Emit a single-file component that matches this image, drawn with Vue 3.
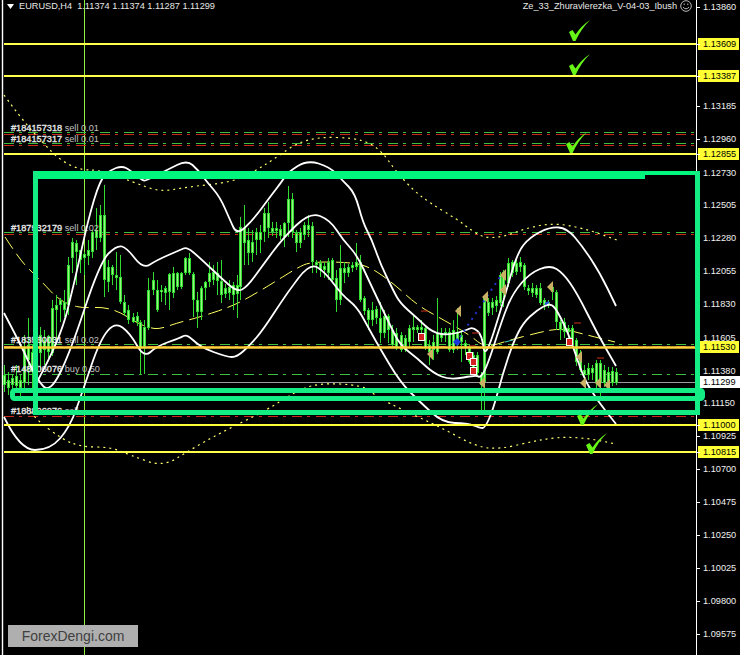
<template>
  <div class="terminal">
    <div class="chart">
      <svg class="plot" width="696" height="655" viewBox="0 0 696 655">
        <line x1="2.5" y1="0" x2="2.5" y2="655" stroke="#fff" stroke-width="1.4" />
        <line x1="84.5" y1="0" x2="84.5" y2="655" stroke="#8ff23c" />

        <g v-for="o in orderLines" :key="o.y">
          <line v-if="o.green" class="order" x1="4" x2="694" :y1="o.y" :y2="o.y" stroke="#3fbf3f" />
          <line v-if="o.red" class="order" x1="4" x2="694" :y1="o.y + 2" :y2="o.y + 2" stroke="#c92a1c" />
        </g>
        <line x1="4" y1="382.5" x2="696" y2="382.5" stroke="#9a9aa0" />

        <path class="ma dots" :d="smooth(maUpper)" />
        <path class="ma dots" :d="smooth(maLower)" />
        <path class="ma dashes" :d="smooth(maMiddle)" />

        <g v-for="c in candles" :key="c[0]">
          <line :x1="c[0] + 0.5" :x2="c[0] + 0.5" :y1="c[1]" :y2="c[4]" stroke="#2fdc2f" />
          <rect :x="c[0] - 1" :y="c[2]" width="3" :height="c[3] - c[2]" fill="#2fdc2f" />
          <rect :x="c[0]" :y="c[2] + 1" width="1" :height="Math.max(c[3] - c[2] - 2, 1)" fill="#9cf482" />
        </g>

        <text v-for="t in orderText" :key="t.y" class="order-text" x="11" :y="t.y"><tspan class="ticket">{{ t.ticket }}</tspan> {{ t.rest }}</text>

        <path class="band" :d="smooth(bandUpper)" />
        <path class="band" :d="smooth(bandMiddle)" />
        <path class="band" :d="smooth(bandLower)" />

        <path d="M456 343 L500 277" stroke="#2233cc" stroke-width="2" stroke-dasharray="2 5" fill="none" />
        <path d="M457 338 l4 4 l-4 4 l-4 -4 z" fill="#1a35e0" />
        <path d="M505 342 l8 -2" stroke="#3fd0c0" fill="none" />
        <path d="M545 304 l4 -2" stroke="#2a50e0" stroke-width="2" fill="none" />
        <g v-for="r in reds" :key="r[0] + '-' + r[1]">
          <rect :x="r[0] - 3" :y="r[1] - 4" width="7" height="8" fill="#fff" />
          <rect :x="r[0] - 2" :y="r[1] - 3" width="5" height="6" fill="#d42020" />
        </g>
        <path v-for="d in redDashes" :key="d[0]" :d="`M${d[0]} ${d[1]} h7`" stroke="#d0301c" fill="none" />
        <path v-for="a in arrows" :key="a[0] + '-' + a[1]" :d="`M${a[0] - 3} ${a[1]} l6 -6 v12 z`" fill="#c9b065" />

        <line
          v-for="l in levels"
          :key="l.y"
          x1="4"
          x2="696"
          :y1="l.y"
          :y2="l.y"
          :stroke="l.color"
          :stroke-width="l.w"
        />

        <path
          v-for="k in checks"
          :key="k[1]"
          :transform="`translate(${k[0]} ${k[1]})`"
          d="M0 12 L3.5 10 L6.5 14.5 Q12 6 21 0 Q12 9 6.5 21 L4 21 Z"
          fill="#66f516"
        />
      </svg>

      <div class="legend">
        <div class="symbol">
          <svg width="7" height="5" viewBox="0 0 7 5"><path d="M0 0h7L3.5 5z" fill="#fff" /></svg>
          <span>EURUSD,H4&nbsp; 1.11374 1.11374 1.11287 1.11299</span>
        </div>
        <div class="expert">
          <span>Ze_33_Zhuravlerezka_V-04-03_Ibush</span>
          <svg width="12" height="12" viewBox="0 0 12 12" fill="none" stroke="#bbb">
            <circle cx="6" cy="6" r="5.3" />
            <path d="M3 7.2 Q6 10.4 9 7.2" />
            <path d="M4.2 3.5v1.6M7.8 3.5v1.6" />
          </svg>
        </div>
      </div>

      <div class="logo">ForexDengi.com</div>
    </div>

    <div class="scale">
      <span
        v-for="p in prices"
        :key="p.text"
        class="price"
        :class="p.kind"
        :style="{ top: p.y - 6 + 'px' }"
      >{{ p.text }}</span>
    </div>

    <!-- hand drawn highlight on top of everything -->
    <svg class="marker" width="740" height="655" viewBox="0 0 740 655">
      <path d="M33 171H700V175H645V179H33Z" fill="#00f77e" />
      <path d="M33 171H38V415H33ZM695 171H700V415H695ZM33 410H700V415H33Z" fill="#14ec84" />
      <rect x="12.5" y="390.5" width="690" height="8" rx="2" fill="none" stroke="#14ec84" stroke-width="5" />
    </svg>
  </div>
</template>

<script setup>
const bandUpper = "38,380 60,340 75,280 88,220 100,180 110,170 122,166 130,170 143,181 147,180 167,170 187,160 198,170 207,182 220,197 230,220 237,235 253,220 270,197 283,180 287,173 307,160 330,167 342,180 355,193 363,223 372,240 380,263 393,290 400,303 417,318 433,333 450,335 467,330 473,327 482,335 485,360 503,303 517,253 530,237 550,227 567,228 583,247 600,273 616,306";
const bandMiddle = "4,313 20,343 37,380 50,393 70,353 100,262 117,245 127,248 143,269 157,260 180,250 187,247 200,258 220,277 237,292 247,287 263,265 283,238 310,212 330,220 343,240 357,255 370,283 390,325 400,345 417,358 433,373 450,380 477,375 480,378 487,367 503,317 513,293 530,273 550,265 563,273 577,293 597,333 616,366";
const bandLower = "4,417 20,450 50,450 70,427 83,390 100,340 115,322 130,333 144,358 157,346 180,338 187,334 200,347 227,357 237,357 250,345 263,330 287,293 310,263 325,272 342,295 357,307 368,327 378,345 400,382 420,402 443,423 467,423 480,428 485,428 493,410 503,373 513,343 523,323 537,310 550,303 557,310 570,337 583,377 597,400 616,424";

const maUpper = "4,95 20,117 43,143 60,160 80,170 100,170 133,182 160,192 187,187 233,182 257,170 277,157 297,143 320,137 353,138 370,143 383,153 395,170 413,190 430,203 458,220 467,227 483,238 503,237 527,228 553,223 583,228 617,240";
const maMiddle = "5,237 20,260 33,273 43,283 57,298 70,305 83,308 103,307 120,312 137,323 150,328 160,329 177,323 200,317 230,307 248,298 273,283 297,268 310,262 343,262 367,265 393,283 417,305 440,318 470,335 485,348 510,340 537,333 560,328 587,335 615,342";
const maLower = "27,407 33,417 63,440 83,447 110,447 130,455 163,467 190,450 220,433 267,410 293,393 317,383 363,385 377,397 403,410 440,427 477,447 500,449 530,442 557,437 587,438 616,444";

// curve through the midpoints so the traced lines don't look polygonal
const smooth = (str) => {
  const pts = str.split(" ").map((p) => p.split(",").map(Number));
  let d = `M${pts[0][0]} ${pts[0][1]}`;
  for (let i = 1; i < pts.length - 1; i++) {
    const mx = (pts[i][0] + pts[i + 1][0]) / 2;
    const my = (pts[i][1] + pts[i + 1][1]) / 2;
    d += ` Q${pts[i][0]} ${pts[i][1]} ${mx} ${my}`;
  }
  const last = pts[pts.length - 1];
  return d + ` L${last[0]} ${last[1]}`;
};

const orderLines = [
  { y: 132.5, green: true, red: true },
  { y: 143.5, green: true, red: true },
  { y: 232.5, green: true, red: true },
  { y: 344.5, green: true, red: true },
  { y: 374.5, green: true, red: false },
  { y: 414.5, green: false, red: true },
];

const orderText = [
  { y: 131, ticket: "#184157318", rest: "sell 0.01" },
  { y: 142, ticket: "#184157317", rest: "sell 0.01" },
  { y: 231, ticket: "#187932179", rest: "sell 0.02" },
  { y: 343, ticket: "#183560031", rest: "sell 0.02" },
  { y: 372, ticket: "#148806076", rest: "buy 0.50" },
  { y: 414, ticket: "#188806076", rest: "sell" },
];

const levels = [
  { y: 44, color: "#ffff4a", w: 2 },
  { y: 76, color: "#ffff4a", w: 2 },
  { y: 154, color: "#ffff4a", w: 2 },
  { y: 347.5, color: "#ffd23c", w: 2.4 },
  { y: 425, color: "#ffff3a", w: 2 },
  { y: 452, color: "#ffff4a", w: 2 },
];

const checks = [[569, 20], [569, 54], [566, 132], [577, 404], [586, 433]];

// x, high, body top, body bottom, low
const candles = [
  [4, 365, 375, 385, 392], [8, 372, 380, 388, 395], [12, 375, 378, 385, 398], [16, 365, 376, 386, 392],
  [20, 375, 380, 388, 400], [24, 335, 347, 383, 392], [28, 318, 345, 360, 385], [32, 345, 352, 372, 392],
  [36, 340, 348, 355, 372], [40, 327, 335, 353, 370], [44, 330, 340, 350, 365], [48, 335, 336, 352, 358],
  [52, 300, 308, 353, 356], [56, 295, 305, 310, 340], [60, 298, 300, 305, 322], [64, 290, 302, 310, 317],
  [68, 257, 265, 305, 315], [72, 238, 242, 258, 273], [76, 240, 243, 252, 285], [80, 250, 250, 260, 273],
  [84, 252, 254, 258, 275], [88, 240, 250, 256, 265], [92, 230, 232, 252, 258], [96, 208, 230, 238, 250],
  [100, 205, 215, 238, 242], [104, 185, 215, 280, 297], [108, 260, 267, 282, 292], [112, 265, 267, 275, 285],
  [116, 252, 275, 278, 290], [120, 255, 277, 302, 304], [124, 295, 302, 313, 316], [128, 305, 310, 320, 324],
  [133, 313, 317, 322, 323], [137, 312, 316, 322, 326], [140, 320, 322, 348, 374], [144, 320, 327, 347, 374],
  [148, 278, 290, 328, 330], [153, 272, 280, 290, 295], [157, 280, 290, 310, 312], [161, 285, 290, 292, 302],
  [165, 286, 288, 293, 305], [169, 273, 274, 292, 310], [173, 267, 273, 293, 298], [177, 272, 273, 287, 290],
  [181, 272, 273, 287, 289], [185, 257, 258, 273, 275], [189, 253, 258, 273, 275], [193, 272, 274, 300, 317],
  [197, 292, 300, 312, 328], [201, 286, 288, 312, 320], [205, 281, 282, 288, 300], [209, 262, 273, 282, 287],
  [213, 265, 272, 280, 285], [217, 262, 273, 281, 295], [221, 260, 281, 295, 303], [225, 284, 288, 294, 298],
  [229, 280, 287, 293, 300], [233, 282, 285, 295, 310], [237, 275, 285, 294, 318],
  [240, 217, 227, 287, 300], [244, 205, 228, 243, 265], [248, 228, 240, 253, 265], [252, 230, 242, 253, 262],
  [256, 228, 232, 240, 255], [260, 225, 232, 240, 253], [264, 208, 213, 232, 242], [268, 202, 213, 228, 238],
  [272, 222, 228, 232, 236], [276, 222, 228, 231, 238], [280, 225, 229, 236, 240], [284, 222, 223, 237, 247],
  [288, 186, 199, 223, 237], [292, 193, 199, 232, 238], [296, 230, 233, 243, 252], [300, 228, 232, 243, 248],
  [304, 222, 225, 235, 240], [308, 215, 225, 230, 237], [312, 222, 226, 262, 273], [316, 260, 262, 265, 273],
  [320, 260, 263, 270, 277], [324, 262, 266, 270, 278], [328, 258, 262, 273, 280], [332, 258, 260, 280, 283],
  [336, 270, 278, 300, 312], [340, 245, 268, 300, 305], [344, 262, 268, 273, 283], [348, 264, 267, 273, 277],
  [352, 262, 265, 268, 272], [356, 243, 262, 267, 270], [360, 255, 262, 300, 302], [364, 296, 298, 311, 315],
  [368, 308, 310, 320, 330], [372, 302, 310, 320, 326], [376, 306, 309, 318, 324], [380, 302, 318, 333, 343],
  [384, 310, 316, 333, 338], [388, 314, 316, 330, 343], [392, 325, 330, 345, 348], [396, 328, 333, 347, 350],
  [401, 332, 335, 350, 352], [405, 335, 338, 350, 352], [409, 325, 328, 342, 348], [413, 315, 327, 330, 342],
  [417, 325, 327, 330, 333], [421, 320, 327, 330, 335], [425, 325, 328, 348, 350], [429, 340, 345, 352, 365],
  [433, 335, 342, 350, 360], [437, 298, 333, 352, 354], [441, 328, 333, 338, 342], [445, 328, 332, 335, 342],
  [449, 328, 332, 350, 352], [453, 320, 330, 350, 353], [457, 308, 332, 345, 350], [461, 330, 335, 342, 362],
  [465, 340, 343, 348, 355], [469, 345, 348, 362, 364], [473, 352, 355, 373, 375], [477, 352, 355, 373, 376],
  [481, 372, 375, 385, 415], [484, 297, 298, 382, 415], [488, 298, 302, 313, 316], [492, 298, 302, 308, 315],
  [496, 296, 300, 306, 312], [500, 272, 275, 303, 306], [503, 270, 272, 293, 307], [508, 258, 263, 283, 287],
  [512, 260, 262, 273, 277], [516, 260, 263, 272, 275], [520, 257, 262, 267, 272], [524, 263, 265, 287, 290],
  [528, 285, 288, 291, 295], [532, 283, 288, 293, 297], [536, 285, 288, 295, 298], [540, 283, 288, 303, 305],
  [544, 298, 300, 305, 310], [548, 300, 302, 305, 308], [552, 283, 287, 292, 300], [556, 290, 292, 322, 330],
  [560, 320, 322, 330, 340], [564, 318, 322, 332, 338], [568, 325, 328, 332, 345], [572, 325, 328, 345, 348],
  [576, 338, 340, 362, 366], [580, 350, 353, 370, 372], [584, 365, 370, 375, 383], [588, 363, 368, 375, 380],
  [592, 365, 368, 373, 380], [596, 360, 363, 383, 390], [600, 360, 363, 383, 397], [604, 365, 370, 383, 387],
  [608, 367, 372, 383, 387], [612, 367, 371, 383, 386], [616, 368, 372, 383, 385],
];

const arrows = [
  [458, 311], [485, 297], [503, 275], [503, 290], [550, 287], [430, 354],
  [482, 383], [583, 383], [598, 383], [607, 385], [579, 357],
];
const reds = [[421, 337], [469, 356], [473, 362], [473, 371], [569, 342]];
const redDashes = [[421, 311], [574, 323], [597, 358], [472, 333], [469, 346]];

const prices = [
  { text: "1.13860", y: 7 },
  { text: "1.13609", y: 44, kind: "line" },
  { text: "1.13387", y: 76, kind: "line" },
  { text: "1.13185", y: 106 },
  { text: "1.12960", y: 139 },
  { text: "1.12855", y: 154, kind: "line" },
  { text: "1.12730", y: 173 },
  { text: "1.12505", y: 205 },
  { text: "1.12280", y: 238 },
  { text: "1.12055", y: 271 },
  { text: "1.11830", y: 304 },
  { text: "1.11605", y: 338 },
  { text: "1.11530", y: 347, kind: "line" },
  { text: "1.11380", y: 371 },
  { text: "1.11299", y: 382, kind: "bid" },
  { text: "1.11150", y: 403 },
  { text: "1.11000", y: 425, kind: "line" },
  { text: "1.10925", y: 436 },
  { text: "1.10815", y: 452, kind: "line" },
  { text: "1.10700", y: 469 },
  { text: "1.10475", y: 502 },
  { text: "1.10250", y: 535 },
  { text: "1.10025", y: 568 },
  { text: "1.09800", y: 601 },
  { text: "1.09575", y: 634 },
];
</script>

<style>
html, body {
  margin: 0;
  background: #000;
}
</style>

<style scoped>
.terminal {
  position: relative;
  display: flex;
  width: 740px;
  height: 655px;
  overflow: hidden;
  background: #000;
  color: #e8e8e8;
  font-family: "Liberation Sans", sans-serif;
  font-size: 9.2px;
}

.chart {
  position: relative;
  flex: 0 0 696px;
}

.plot {
  display: block;
}

.order {
  stroke-dasharray: 10 5 3 6;
}

.order-text {
  fill: #c0c0c0;
  font-size: 9.2px;
}

.ticket {
  fill: #e4e4e4;
  stroke: #e4e4e4;
  stroke-width: 0.35px;
}

.ma {
  fill: none;
}

.dots {
  stroke: #ffff70;
  stroke-width: 1.2;
  stroke-dasharray: 2 4;
}

.dashes {
  stroke: #ffff60;
  stroke-dasharray: 14 6;
}

.band {
  fill: none;
  stroke: #fff;
  stroke-width: 1.8;
  stroke-linejoin: round;
}

.legend {
  position: absolute;
  top: 0;
  left: 7px;
  right: 4px;
  display: flex;
  justify-content: space-between;
  align-items: center;
  height: 12px;
}

.symbol,
.expert {
  display: flex;
  align-items: center;
  gap: 5px;
}

.expert {
  gap: 3px;
}

.logo {
  position: absolute;
  left: 8px;
  top: 625px;
  width: 130px;
  height: 22px;
  line-height: 22px;
  text-align: center;
  background: rgba(182, 182, 182, 0.96);
  color: #3f3f3f;
  font-size: 14px;
}

.scale {
  position: relative;
  flex: 1;
  border-left: 1px solid #fff;
}

.price {
  position: absolute;
  left: 1px;
  right: 1px;
  height: 12px;
  line-height: 12px;
  padding-left: 5px;
  color: #f0f0f0;
  white-space: nowrap;
}

.price::before {
  content: "";
  position: absolute;
  left: -1px;
  top: 6px;
  width: 3px;
  height: 1px;
  background: #fff;
}

.price.line,
.price.bid {
  color: #000;
}

.price.line {
  background: #ffff33;
}

.price.bid {
  left: 3px;
  right: 0;
  padding-left: 3px;
  background: #fff;
}

.marker {
  position: absolute;
  left: 0;
  top: 0;
  pointer-events: none;
}
</style>
